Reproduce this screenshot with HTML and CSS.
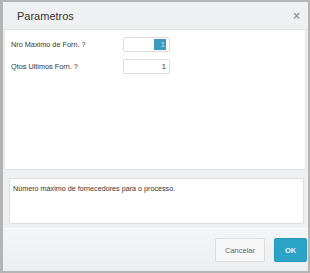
FILE: index.html
```html
<!DOCTYPE html>
<html lang="pt">
<head>
  <meta charset="UTF-8" />
  <title>Parametros</title>
  <link rel="stylesheet" href="styles.css">
</head>
<body>
  <div class="dialog">
    <div class="dialog-header">
      <span class="dialog-title">Parametros</span>
      <span class="dialog-close">&times;</span>
    </div>

    <div class="form-panel">
      <div class="form-row">
        <label>Nro Maximo de Forn. ?</label>
        <div class="field"><span class="selected">1</span></div>
      </div>
      <div class="form-row">
        <label>Qtos Ultimos Forn. ?</label>
        <div class="field">1</div>
      </div>
    </div>

    <div class="help-box">Número máximo de fornecedores para o processo.</div>

    <div class="dialog-footer">
      <button class="btn btn-cancel">Cancelar</button>
      <button class="btn btn-ok">OK</button>
    </div>
  </div>
</body>
</html>
```
FILE: styles.css
```css
:root {
  --frame: #b4b4b4;
  --panel-bg: #eff0f1;
  --border: #d9dadb;
  --text: #333;
  --accent: #2ba3c6;
}

html, body {
  margin: 0;
  height: 100%;
}

body {
  background-color: var(--frame);
  font-family: 'Liberation Sans', Arial, sans-serif;
  color: var(--text);
  padding: 2px 2px 2px 3px;
  box-sizing: border-box;
}

.dialog {
  height: 269px;
  background-color: var(--panel-bg);
  display: flex;
  flex-direction: column;
  box-sizing: border-box;
}

.dialog-header {
  height: 27px;
  display: flex;
  align-items: center;
  justify-content: space-between;
  padding: 0 8px 0 14px;
  border-bottom: 1px solid #e2e3e4;
}

.dialog-title {
  font-size: 11px;
  color: #333;
}

.dialog-close {
  font-size: 12px;
  font-weight: bold;
  color: #9a9a9a;
}

.form-panel {
  height: 140px;
  margin: 0 2px 0 1px;
  background-color: #fff;
  border: 1px solid #e3e4e5;
  border-top: none;
  padding: 7px 0 0 6px;
  box-sizing: border-box;
  display: flex;
  flex-direction: column;
  gap: 7px;
}

.form-row {
  display: flex;
  align-items: center;
}

.form-row label {
  width: 112px;
  font-size: 7.3px;
  color: #333;
}

.field {
  width: 47px;
  height: 15px;
  box-sizing: border-box;
  border: 1px solid #ddd;
  border-radius: 2px;
  font-size: 7.5px;
  text-align: right;
  padding: 2px 3px 0 0;
  color: #333;
}

.selected {
  display: inline-block;
  width: 12px;
  height: 11px;
  margin-top: -1px;
  background-color: #3a9bbf;
  color: #cfe6ef;
  line-height: 11px;
  padding-right: 1px;
  box-sizing: border-box;
}

.help-box {
  height: 46px;
  margin: 8px 4px 0 6px;
  background-color: #fff;
  border: 1px solid #dcdddd;
  border-radius: 2px;
  box-sizing: border-box;
  padding: 5px 3px;
  font-size: 7.2px;
  color: #333;
}

.dialog-footer {
  flex: 1;
  margin-top: 4px;
  border-top: 1px solid #fafafa;
  background: linear-gradient(#f4f5f6, #eceeef);
  display: flex;
  justify-content: flex-end;
  align-items: flex-start;
  gap: 9px;
  padding: 9px 1px 0 0;
}

.btn {
  height: 24px;
  font-family: 'Liberation Sans', Arial, sans-serif;
  font-size: 7.5px;
  border-radius: 2px;
  cursor: pointer;
}

.btn-cancel {
  width: 50px;
  background-color: #f7f7f7;
  border: 1px solid #dcdcdc;
  color: #666;
}

.btn-ok {
  width: 33px;
  background-color: var(--accent);
  border: 1px solid #2596b8;
  color: #e6f4f9;
  font-weight: bold;
}
```
